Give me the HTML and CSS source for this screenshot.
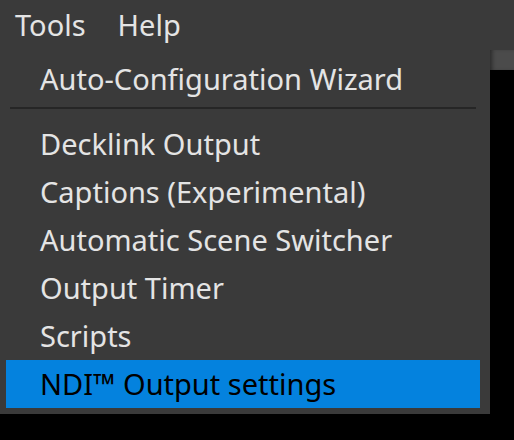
FILE: index.html
```html
<!DOCTYPE html>
<html>
<head>
    <link rel="stylesheet" href="styles.css">
</head>
<body>

<div class="menubar">
    <span class="menubar-item">Tools</span>
    <span class="menubar-item">Help</span>
</div>

<div class="main">
    <div class="menu">
        <div class="menu-item">Auto-Configuration Wizard</div>
        <div class="separator"></div>
        <div class="menu-item">Decklink Output</div>
        <div class="menu-item">Captions (Experimental)</div>
        <div class="menu-item">Automatic Scene Switcher</div>
        <div class="menu-item">Output Timer</div>
        <div class="menu-item">Scripts</div>
        <div class="menu-item active">NDI™ Output settings</div>
    </div>
    <div class="side">
        <div class="side-bar"></div>
    </div>
</div>

</body>
</html>
```

FILE: styles.css
```css
body {
    margin: 0;
    background-color: #000;
    font-family: "Noto Sans", "Open Sans", sans-serif;
    font-size: 29px;
    color: #e4e4e4;
}

.menubar {
    display: flex;
    height: 50px;
    padding-left: 15px;
    gap: 32px;
    background-color: #3a3a3a;
    line-height: 50px;
}

.main {
    display: flex;
    width: 514px;
}

.menu {
    width: 490px;
    padding: 5px 0 6px 0;
    background-color: #3a3a3a;
    box-sizing: border-box;
}

.menu-item {
    height: 48px;
    margin: 0 10px 0 6px;
    padding-left: 34px;
    line-height: 48px;
    white-space: nowrap;
}

.menu-item.active {
    background-color: #0482de;
    color: #000;
}

.separator {
    height: 2px;
    margin: 4px 14px 11px 10px;
    background-color: #262626;
}

.side {
    flex: 1;
}

.side-bar {
    height: 20px;
    background-color: #4b4b4b;
    box-shadow: inset 4px 0 4px -2px #2a2a2a;
}
```
